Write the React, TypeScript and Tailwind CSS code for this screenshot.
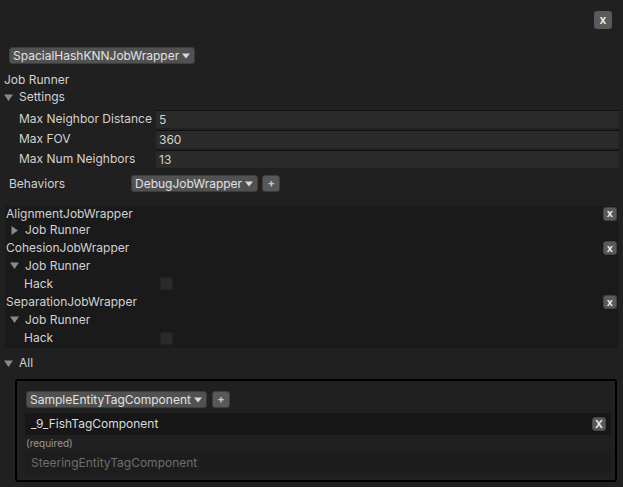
import React from 'react';

const Tri = ({ open }: { open: boolean }) => (
  <svg width="9" height="9" viewBox="0 0 9 9" className="shrink-0">
    {open ? <path d="M0 1.5 L9 1.5 L4.5 8 Z" fill="#8a8a8a" /> : <path d="M1.5 0 L8 4.5 L1.5 9 Z" fill="#8a8a8a" />}
  </svg>
);

const Dropdown = ({ label }: { label: string }) => (
  <div className="h-[17px] flex items-center gap-[3px] pl-[3px] pr-[4px] bg-[#515151] border border-[#3c3c3c] rounded-[3px] text-[#e2e2e2]">
    <span>{label}</span>
    <svg width="8" height="6" viewBox="0 0 8 6"><path d="M0 0.5 L8 0.5 L4 5.5 Z" fill="#d8d8d8" /></svg>
  </div>
);

const Plus = () => (
  <div className="w-[18px] h-[17px] flex items-center justify-center bg-[#585858] border border-[#3c3c3c] rounded-[3px] text-[#c8c8c8] text-[11px] font-bold leading-none">+</div>
);

const XBtn = ({ size = 14, upper = false }: { size?: number; upper?: boolean }) => (
  <div
    className={
      size === 18
        ? 'w-[18px] h-[18px] flex items-center justify-center bg-[#5a5a5a] rounded-[3px] text-[#f0f0f0] text-[12px] font-semibold leading-none'
        : 'w-[14px] h-[14px] flex items-center justify-center bg-[#5a5a5a] border border-[#444] rounded-[3px] text-[#f0f0f0] text-[11px] font-semibold leading-none'
    }
  >
    {upper ? 'X' : 'x'}
  </div>
);

const Field = ({ label, value }: { label: string; value: string }) => (
  <div className="h-[18px] mb-[2px] flex items-center">
    <div className="w-[137px] pl-[19px] box-content shrink-0">{label}</div>
    <div className="flex-1 h-full mr-[4px] bg-[#2a2a2a] border-t border-[#111111] flex items-center pl-[3px]">{value}</div>
  </div>
);

const Check = () => <div className="w-[13px] h-[13px] bg-[#2a2a2a] border border-[#232323] rounded-[2px]" />;

const BEHAVIORS = [
  { name: 'AlignmentJobWrapper', open: false, h: 'h-[15px]', hackH: '' },
  { name: 'CohesionJobWrapper', open: true, h: 'h-[18px]', hackH: 'h-[19px]' },
  { name: 'SeparationJobWrapper', open: true, h: 'h-[18px]', hackH: 'h-[20px]' },
];

export default function App() {
  return (
    <div className="w-[623px] h-[487px] overflow-hidden bg-[#202020] text-[#d2d2d2] text-[12px] font-['Inter',sans-serif]">
      <div className="flex justify-end pt-[11px] pr-[11px]">
        <XBtn size={18} />
      </div>
      <div className="mt-[18px] pl-[9px] flex">
        <Dropdown label="SpacialHashKNNJobWrapper" />
      </div>
      <div className="mt-[7px] h-[17px] pl-[4px] flex items-center">Job Runner</div>
      <div className="h-[18px] pl-[4px] flex items-center gap-[6px]">
        <Tri open />
        <span>Settings</span>
      </div>
      <div className="mt-[4px]">
        <Field label="Max Neighbor Distance" value="5" />
        <Field label="Max FOV" value="360" />
        <Field label="Max Num Neighbors" value="13" />
      </div>
      <div className="mt-[7px] h-[17px] flex items-center">
        <div className="w-[122px] pl-[9px] box-content shrink-0">Behaviors</div>
        <Dropdown label="DebugJobWrapper" />
        <div className="ml-[4px]">
          <Plus />
        </div>
      </div>
      <div className="mt-[14px] ml-[5px] mr-[5px] bg-[#1a1a1a]">
        {BEHAVIORS.map((b, i) => (
          <div key={i}>
            <div className={`${b.h} flex items-center justify-between pl-[1px] pr-[1px]`}>
              <span>{b.name}</span>
              <XBtn />
            </div>
            <div className={`${b.open ? 'h-[17px]' : 'h-[18px]'} flex items-center gap-[6px] pl-[5px]`}>
              <Tri open={b.open} />
              <span>Job Runner</span>
            </div>
            {b.open && (
              <div className={`${b.hackH} flex items-center`}>
                <div className="w-[136px] pl-[19px] box-content shrink-0">Hack</div>
                <Check />
              </div>
            )}
          </div>
        ))}
      </div>
      <div className="mt-[6px] h-[18px] pl-[4px] flex items-center gap-[6px]">
        <Tri open />
        <span>All</span>
      </div>
      <div className="mt-[7px] ml-[15px] w-[602px] h-[103px] border-2 border-black rounded-[3px] pt-[10px]">
        <div className="flex items-center pl-[9px] gap-[5px]">
          <Dropdown label="SampleEntityTagComponent" />
          <Plus />
        </div>
        <div className="mt-[5px] ml-[8px] mr-[4px] h-[22px] bg-[#171717] flex items-center justify-between pl-[6px] pr-[5px] text-[#dcdcdc]">
          <span>_9_FishTagComponent</span>
          <XBtn upper />
        </div>
        <div className="h-[17px] ml-[9px] flex items-center text-[10px] text-[#9a9a9a]">(required)</div>
        <div className="ml-[8px] mr-[4px] h-[22px] bg-[#1d1d1d] flex items-center pl-[6px] text-[#6e6e6e]">
          SteeringEntityTagComponent
        </div>
      </div>
    </div>
  );
}
